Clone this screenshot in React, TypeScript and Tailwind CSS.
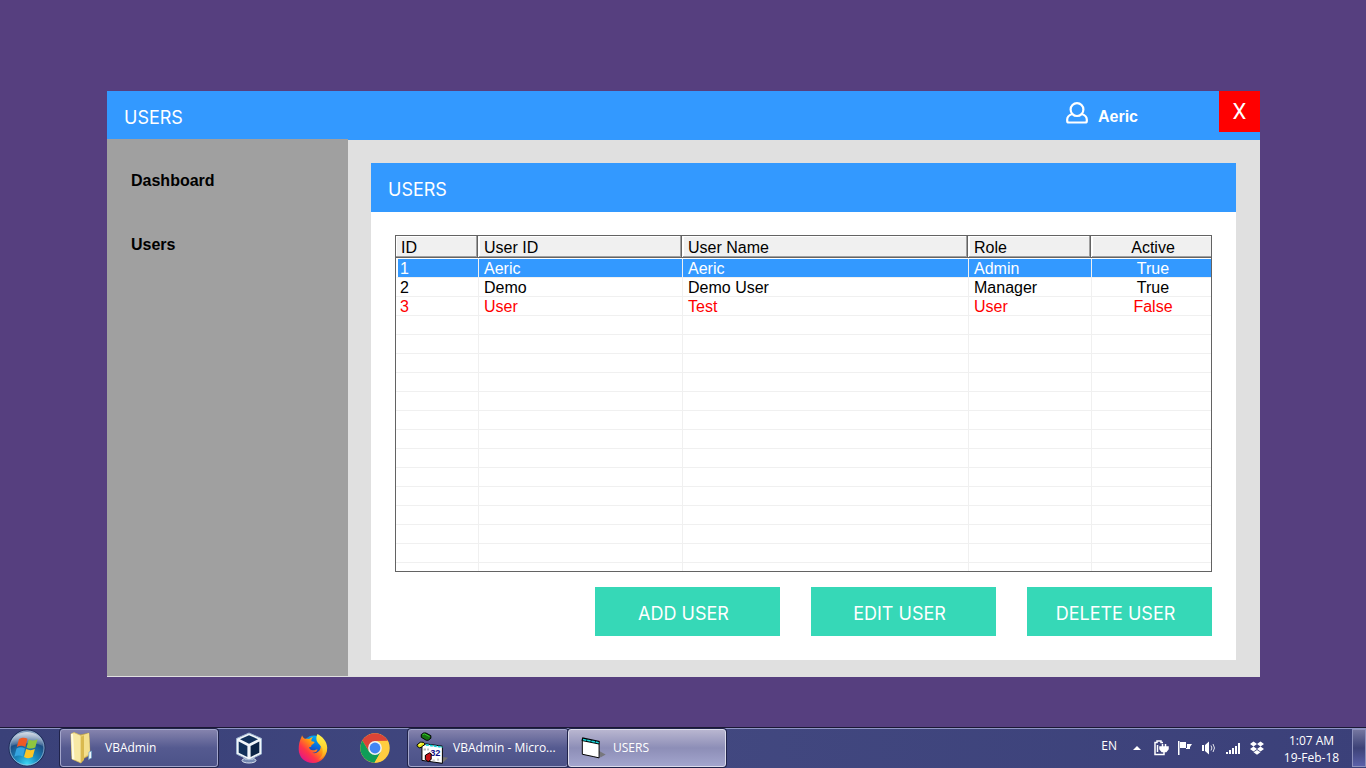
import React from 'react';

interface User {
  id: number;
  userId: string;
  name: string;
  role: string;
  active: boolean;
}

const users: User[] = [
  { id: 1, userId: 'Aeric', name: 'Aeric', role: 'Admin', active: true },
  { id: 2, userId: 'Demo', name: 'Demo User', role: 'Manager', active: true },
  { id: 3, userId: 'User', name: 'Test', role: 'User', active: false },
];

const selectedId = 1;
const emptyRows = Array.from({ length: 13 }, (_, i) => i);

const headings = ['ID', 'User ID', 'User Name', 'Role', 'Active'];

const UserIcon: React.FC = () => (
  <svg viewBox="0 0 22 22" className="h-[22px] w-[22px]" fill="none" stroke="white" strokeWidth="2.2" strokeLinejoin="round">
    <circle cx="11" cy="7.6" r="6.4" />
    <path d="M6.200 12C3 13.100 1.200 14.800 1.200 17.600v1.400c0 .9.6 1.500 1.500 1.500h16.600c.9 0 1.500-.6 1.500-1.500v-1.400c0-2.800-1.800-4.500-5-5.600" />
  </svg>
);

const StartOrb: React.FC = () => (
  <svg viewBox="0 0 38 38" className="h-[38px] w-[38px]">
    <defs>
      <radialGradient id="orb" cx="50%" cy="95%" r="85%">
        <stop offset="0" stopColor="#3fd9f5" />
        <stop offset="0.35" stopColor="#1b8cc0" />
        <stop offset="0.75" stopColor="#1c4f86" />
        <stop offset="1" stopColor="#56779f" />
      </radialGradient>
      <linearGradient id="orbGloss" x1="0" y1="0" x2="0" y2="1">
        <stop offset="0" stopColor="#fff" stopOpacity="0.75" />
        <stop offset="1" stopColor="#fff" stopOpacity="0.1" />
      </linearGradient>
    </defs>
    <circle cx="19" cy="19" r="18" fill="url(#orb)" stroke="#1d2a55" />
    <circle cx="19" cy="19" r="17" fill="none" stroke="#a9c3df" strokeOpacity="0.7" />
    <path d="M3 17C3 8 10 3 19 3s16 5 16 14c-9-4-22-3-32 0Z" fill="url(#orbGloss)" />
    <path d="M11 10c3.200-1.900 6-1.700 8.500-.2l-2.200 8.200c-2.800-1.600-5.400-1.600-8.500 0Z" fill="#ef5a24" />
    <path d="M20.800 10.400c2.900 1.500 5.700 1.300 8.700-.2l-2.200 8.300c-3.100 1.500-6 1.500-8.700-.1Z" fill="#8fc63f" />
    <path d="M8.500 19.500c3-1.600 5.700-1.500 8.500 0l-2.200 8.100c-2.700-1.600-5.400-1.500-8.500.1Z" fill="#35a4e0" />
    <path d="M18.200 20c2.700 1.500 5.600 1.500 8.700.1l-2.200 8c-3 1.600-5.900 1.500-8.700-.1Z" fill="#fcc526" />
  </svg>
);

const FolderIcon: React.FC = () => (
  <svg viewBox="0 0 23 32" className="h-8 w-[23px]">
    <path d="M10 3l9-2 1 22-9 5Z" fill="#e9cf72" stroke="#b99a3b" strokeWidth="0.6" />
    <path d="M1 2l3-1.500 7 3V31l-9-4Z" fill="#f8e9a5" stroke="#d8bb58" strokeWidth="0.8" />
    <path d="M11 5l3-1.500V28l-3 3Z" fill="#d9b94f" />
    <path d="M14 3l5-2 1 20-6 4Z" fill="#f3df8d" />
    <path d="M1 2l2-.6 1.500 26.400L2 27Z" fill="#fffbe0" />
    <path d="M19 20l2.500-1v7l-3 1.500Z" fill="#eef6fb" stroke="#6c9fc4" strokeWidth="0.7" />
  </svg>
);

const VirtualBoxIcon: React.FC = () => (
  <svg viewBox="0 0 28 32" className="h-8 w-7">
    <ellipse cx="14" cy="28.500" rx="7" ry="2.500" fill="#7488b0" stroke="#d7e0ee" />
    <path d="M10 24h8v4h-8Z" fill="#a9b8d0" />
    <path d="M14 1 26.500 6.500V22L14 28 1.500 22V6.500Z" fill="#f1f6fa" stroke="#9db3d0" />
    <path d="M14 3.200 23 7.200 14 11.800 5 7.200Z" fill="#12315b" />
    <path d="M3.700 9.500l8.700 4.500v11l-8.700-4.300Z" fill="#12315b" />
    <path d="M24.300 9.500l-8.700 4.500v11l8.700-4.300Z" fill="#0c2446" />
  </svg>
);

const FirefoxIcon: React.FC = () => (
  <svg viewBox="0 0 30 31" className="h-[31px] w-[30px]">
    <defs>
      <linearGradient id="fox" x1="0.9" y1="0.1" x2="0.15" y2="0.9">
        <stop offset="0" stopColor="#fff44f" />
        <stop offset="0.4" stopColor="#ff980e" />
        <stop offset="0.7" stopColor="#ff3647" />
        <stop offset="1" stopColor="#e31587" />
      </linearGradient>
      <linearGradient id="foxTail" x1="0" y1="0" x2="0" y2="1">
        <stop offset="0" stopColor="#fff44f" />
        <stop offset="0.6" stopColor="#ffcf2b" />
        <stop offset="1" stopColor="#ff8a16" />
      </linearGradient>
      <linearGradient id="foxGlobe" x1="0.6" y1="0" x2="0.3" y2="1">
        <stop offset="0" stopColor="#00b3f4" />
        <stop offset="0.5" stopColor="#0a63d8" />
        <stop offset="1" stopColor="#34107a" />
      </linearGradient>
    </defs>
    <circle cx="16" cy="14" r="11.500" fill="url(#foxGlobe)" />
    <path d="M3 5c.5-1 .8-1.800 1-2.800.8 1.800 1.700 2.700 3 3.600 1.500-.3 3-.2 4.200.3 1-1 2.200-1.700 3.800-2-1.200 1.300-1.800 2.700-1.600 4.200 1.100.4 2.200.3 3.200.6-.3 1.700-1.900 2.200-3.200 3.100.4 1.700-.8 2-2.300 2.100.2 2.300 2.200 3.500 4.500 3.200 1.500-.2 2.400-1.200 4-.8-.6 2.400-3 3.600-5.600 3.300 4.200 1.300 8.500-1.400 8.800-6.300.2-2.900-1-5.200-2.800-6.500 4.500.8 7.500 3.500 9 6.700.7 9-5.500 16.300-14 16.300C7 30 .7 24 .7 16.400.6 11.800 1.600 8 3 5Z" fill="url(#fox)" />
    <path d="M19.500 1c4.500 2.300 9.500 7.200 9.700 13.500.2 5.700-3.700 10.800-9 12.200 4-2.700 5.200-7 4.200-11-.7-3.100-5.700-5.500-6-9.500-.1-2 .3-3.700 1.100-5.200Z" fill="url(#foxTail)" />
  </svg>
);

const ChromeIcon: React.FC = () => (
  <svg viewBox="0 0 30 30" className="h-[30px] w-[30px]">
    <circle cx="15" cy="15" r="14.700" fill="#ffcd40" />
    <path d="M2.300 7.600A14.700 14.700 0 0 1 27.700 7.700L15 8 9 18.500Z" fill="#db4437" />
    <path d="M2.300 7.600a14.700 14.700 0 0 0 12.200 22.100L21 18.500 15 21.500 9 18.500Z" fill="#0f9d58" />
    <path d="M15 8h12.900c3.500 9-2 21.700-13.400 21.700L21 18.500Z" fill="#ffcd40" />
    <circle cx="15" cy="15" r="6.900" fill="#f1f1f1" />
    <circle cx="15" cy="15" r="5.400" fill="#4285f4" />
  </svg>
);

const VisualBasicIcon: React.FC = () => (
  <svg viewBox="50 34 100 100" className="h-[33px] w-[33px]">
    <path d="M66 42l7-5h7l15 8v8l-8 6h-6l-15-9Z" fill="#15710f" stroke="#000" strokeWidth="3" />
    <path d="M70 42l6-2 15 8" stroke="#35c82a" strokeWidth="3" fill="none" />
    <path d="M53 73l10-8h9l5 5-4 8-12 4-7-4Z" fill="#e5e51d" stroke="#000" strokeWidth="3" />
    <path d="M59 73l8-5" stroke="#fffca0" strokeWidth="3" />
    <path d="M130 128l17-16-14-2Z" fill="#77746f" />
    <path d="M68 78l12-8 50 7v52l-34-5-28-4Z" fill="#fff" stroke="#000" strokeWidth="3" />
    <path d="M80 73l50 7" stroke="#12cfd6" strokeWidth="5" strokeDasharray="9 3" />
    <path d="M73 84h7v6h-7Zm3 20h6v7h-6ZM84 84h5v6h-5Z" fill="#b9b9b9" />
    <text x="93" y="108" fill="#101088" className="font-['Liberation_Sans',sans-serif] text-[28px] font-bold">32</text>
    <path d="M79 104l12-7 5 3v17l-9 7-9-7Z" fill="#c61217" stroke="#000" strokeWidth="3" />
    <path d="M100 117h7v6h-7Zm14-3h6v7h-6Z" fill="#c8c8c8" />
  </svg>
);

const FormIcon: React.FC = () => (
  <svg viewBox="64 50 76 72" className="h-6 w-[25px]">
    <path d="M118 94l21 12-16 9Z" fill="#77777d" />
    <path d="M68 58l51 11v47l-18-4-33-7Z" fill="#fff" stroke="#000" strokeWidth="3" />
    <path d="M67 59l53 11" stroke="#000" strokeWidth="11" />
    <path d="M70 60l48 10" stroke="#18d6da" strokeWidth="5" strokeDasharray="11 2" />
  </svg>
);

const PowerIcon: React.FC = () => (
  <svg viewBox="0 0 16 16" className="h-4 w-4" fill="none" stroke="white" strokeWidth="1.500">
    <path d="M8 14.500H2v-12h2V1h4v1.500h2" />
    <path d="M4.500 5v7" />
    <path d="M9.500 4v3m3-3v3" />
    <path d="M7 7h8v2l-2 2.500H9L7 9Z" fill="white" />
    <path d="M11 11v3.500H8" />
  </svg>
);

const FlagIcon: React.FC = () => (
  <svg viewBox="0 0 16 16" className="h-4 w-4">
    <path d="M1 1h1.500v14H1Z" fill="white" />
    <path d="M3 2h6v2h6l-2 3v2H9V8H3Z" fill="white" />
    <path d="M9.500 4v4" stroke="#3f4479" />
  </svg>
);

const SpeakerIcon: React.FC = () => (
  <svg viewBox="0 0 16 16" className="h-4 w-4">
    <path d="M1 5h2v6H1Zm3 0 4-3.500v13L4 11Z" fill="white" />
    <path d="M10 5.500q1.800 2.500 0 5M12 4q3 4 0 8" fill="none" stroke="white" strokeWidth="1" strokeOpacity="0.85" />
  </svg>
);

const SignalIcon: React.FC = () => (
  <svg viewBox="0 0 16 16" className="h-4 w-4" fill="white">
    <path d="M1 12h2v2H1ZM4 10h2v4H4ZM7 8h2v6H7ZM10 6h2v8h-2ZM13 3h2v11h-2Z" />
  </svg>
);

const DropboxIcon: React.FC = () => (
  <svg viewBox="0 0 16 16" className="h-4 w-4" fill="white">
    <path d="M4.500 1.500 8 4 4.500 6.500 1 4ZM11.500 1.500 15 4l-3.500 2.500L8 4ZM4.500 6.500 8 9l-3.500 2.500L1 9ZM11.500 6.500 15 9l-3.500 2.500L8 9ZM8 10l3.500 2.300L8 14.700l-3.500-2.400Z" />
  </svg>
);

const UsersTable: React.FC = () => (
  <div className="border border-[#636363]">
    <table className="w-full table-fixed border-separate border-spacing-0 text-base leading-[17px]">
      <colgroup>
        <col className="w-[83px]" />
        <col className="w-[204px]" />
        <col />
        <col className="w-[123px]" />
        <col className="w-[119px]" />
      </colgroup>
      <thead>
        <tr className="h-[22px]">
          {headings.map((heading) => (
            <th
              key={heading}
              scope="col"
              className="border-b border-[#636363] bg-[#f0f0f0] p-0 pt-0.5 pl-[5px] text-left font-normal shadow-[inset_-1px_0_#fff,inset_-2px_0_#636363,inset_-3px_-1px_#a0a0a0,inset_1px_1px_#fff] last:pl-[3px] last:text-center last:shadow-[inset_0_-1px_#a0a0a0,inset_1px_1px_#fff]"
            >
              {heading}
            </th>
          ))}
        </tr>
      </thead>
      <tbody>
        {users.map((user) => {
          const selected = user.id === selectedId;
          const cell = selected
            ? 'h-5 border-y border-r border-t-white border-b-[#f0f0f0] border-r-[#f0f0f0] bg-[#3399ff] p-0 pt-px pl-[5px] text-white first:border-l-2 first:border-l-white first:pl-0.5 last:border-r-0 last:pl-[3px] last:text-center'
            : 'h-[19px] border-r border-b border-[#f0f0f0] p-0 pt-px pl-[5px] first:pl-1 last:border-r-0 last:pl-[3px] last:text-center';
          return (
            <tr key={user.id} className={user.active ? 'text-black' : 'text-[#ff0000]'}>
              <td className={cell}>{user.id}</td>
              <td className={cell}>{user.userId}</td>
              <td className={cell}>{user.name}</td>
              <td className={cell}>{user.role}</td>
              <td className={cell}>{user.active ? 'True' : 'False'}</td>
            </tr>
          );
        })}
        {emptyRows.map((row) => (
          <tr key={row}>
            {headings.map((heading) => (
              <td key={heading} className="h-[19px] border-r border-b border-[#f0f0f0] p-0 last:border-r-0" />
            ))}
          </tr>
        ))}
        <tr>
          {headings.map((heading) => (
            <td key={heading} className="h-2 border-r border-[#f0f0f0] p-0 last:border-r-0" />
          ))}
        </tr>
      </tbody>
    </table>
  </div>
);

const Taskbar: React.FC = () => {
  const task =
    'flex h-[38px] items-center rounded-[3px] border border-[#a3a6cb] text-left shadow-[0_0_0_1px_#20234a]';

  return (
    <footer className="flex h-[41px] items-center gap-px border-t border-[#1a1833] bg-linear-to-r from-[#3a4179] via-[#424880] to-[#3b4079] font-['Open_Sans','Noto_Sans',sans-serif] text-xs text-white shadow-[inset_0_1px_#8f95c4]">
      <button aria-label="Start" className="flex w-[59px] items-center pl-2">
        <StartOrb />
      </button>
      <button className={`${task} w-[158px] gap-3 bg-linear-to-b from-[#8583ad] via-[#555a90] to-[#4c5288] pl-[9px]`}>
        <FolderIcon />
        VBAdmin
      </button>
      <button aria-label="VirtualBox" className="flex w-[62px] justify-center pr-0.5">
        <VirtualBoxIcon />
      </button>
      <button aria-label="Firefox" className="flex w-[62px] justify-center">
        <FirefoxIcon />
      </button>
      <button aria-label="Chrome" className="flex w-[62px] justify-center pr-0.5">
        <ChromeIcon />
      </button>
      <div className="flex">
        <button className={`${task} w-[160px] gap-1 bg-linear-to-b from-[#8583ad] via-[#555a90] to-[#4c5288] pl-[7px]`}>
          <VisualBasicIcon />
          VBAdmin - Micro...
        </button>
        <button className={`${task} w-[158px] gap-[7px] border-[#dcdcec] bg-linear-to-b from-[#b9b6d0] via-[#8d8eb7] to-[#a3a5cd] pl-3`}>
          <FormIcon />
          USERS
        </button>
      </div>

      <div className="ml-auto flex h-full items-center">
        <span className="mr-3 pb-1">EN</span>
        <button aria-label="Show hidden icons" className="flex w-4 justify-center">
          <svg viewBox="0 0 8 4" className="h-1 w-2" fill="white">
            <path d="M4 0 8 4H0Z" />
          </svg>
        </button>
        <div className="ml-2 flex gap-2">
          <PowerIcon />
          <FlagIcon />
          <SpeakerIcon />
          <SignalIcon />
          <DropboxIcon />
        </div>
        <div className="w-[87px] pt-0.5 pl-1.5 text-center leading-[17px]">
          <div>1:07 AM</div>
          <div>19-Feb-18</div>
        </div>
        <button
          aria-label="Show desktop"
          className="h-[38px] w-3.5 border border-[#8d91bd] bg-linear-to-b from-[#75769f] via-[#3d4277] to-[#5b60a8]"
        />
      </div>
    </footer>
  );
};

const actions = ['ADD USER', 'EDIT USER', 'DELETE USER'];

export default function App() {
  return (
    <div className="flex min-h-screen flex-col bg-[#563f7f] font-['Liberation_Sans',Arial,sans-serif]">
      <main className="flex flex-1 flex-col pt-[91px] pr-[106px] pb-[50px] pl-[107px]">
        <div className="flex flex-1 flex-col bg-[#e0e0e0]">
          <header className="flex h-12 items-start bg-[#3399ff] text-white">
            <h1 className="self-center pt-1.5 pl-[17px] font-['Inter',sans-serif] text-lg">USERS</h1>
            <div className="mr-[81px] ml-auto flex items-center gap-2.5 self-center">
              <div className="pb-1">
                <UserIcon />
              </div>
              <span className="pt-1 text-base leading-5 font-bold">Aeric</span>
            </div>
            <button aria-label="Close" className="h-[41px] w-[41px] bg-[#ff0000] font-['Roboto',sans-serif] text-[22px]">
              X
            </button>
          </header>

          <div className="flex flex-1">
            <nav className="mb-px flex w-[241px] flex-col bg-[#a0a0a0] pt-2.5 pl-6 font-bold text-black">
              <a href="#dashboard" className="flex h-16 items-center">
                Dashboard
              </a>
              <a href="#users" className="flex h-16 items-center">
                Users
              </a>
            </nav>

            <div className="flex-1 border-t border-[#3399ff] pt-[23px] pr-6 pb-[17px] pl-[23px]">
              <section className="bg-white">
                <h2 className="flex h-[49px] items-center bg-[#3399ff] pt-1 pl-[17px] font-['Inter',sans-serif] text-lg text-white">
                  USERS
                </h2>
                <div className="px-6 pt-[23px] pb-6">
                  <UsersTable />
                  <div className="mt-[15px] flex justify-end gap-[31px]">
                    {actions.map((action) => (
                      <button
                        key={action}
                        className="h-[49px] w-[185px] bg-[#36d8b7] pt-1 pr-2 font-['Inter',sans-serif] text-lg text-white"
                      >
                        {action}
                      </button>
                    ))}
                  </div>
                </div>
              </section>
            </div>
          </div>
        </div>
      </main>

      <Taskbar />
    </div>
  );
}
